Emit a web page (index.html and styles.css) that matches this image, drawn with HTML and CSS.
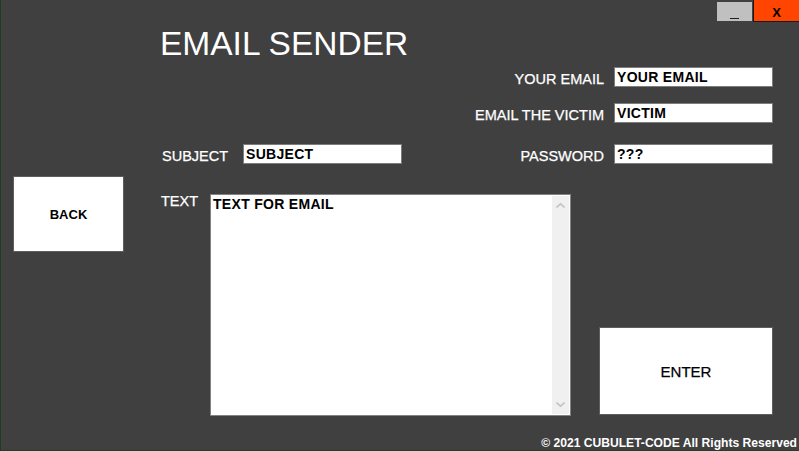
FILE: index.html
```html
<!DOCTYPE html>
<html lang="en">
<head>
<meta charset="utf-8">
<title>Email Sender</title>
<link rel="stylesheet" href="styles.css">
</head>
<body>
<div class="window">
  <div class="winbar">
    <button class="btn-min" type="button"><span class="min-glyph"></span></button>
    <button class="btn-close" type="button">X</button>
  </div>
  <h1 class="title">EMAIL SENDER</h1>
  <div class="row row-right r1">
    <span class="label">YOUR EMAIL</span>
    <div class="field">YOUR EMAIL</div>
  </div>
  <div class="row row-right r2">
    <span class="label">EMAIL THE VICTIM</span>
    <div class="field">VICTIM</div>
  </div>
  <div class="row r3">
    <div class="pair">
      <span class="label label-subject">SUBJECT</span>
      <div class="field">SUBJECT</div>
    </div>
    <div class="pair pair-gap">
      <span class="label">PASSWORD</span>
      <div class="field">???</div>
    </div>
  </div>
  <div class="main">
    <button class="back" type="button">BACK</button>
    <div class="text-group">
      <span class="label label-text">TEXT</span>
      <div class="msg">
        <div class="msg-text">TEXT FOR EMAIL</div>
        <div class="scroll">
          <svg width="9" height="5" viewBox="0 0 9 5"><polyline points="0.5,4.5 4.5,0.8 8.5,4.5" fill="none" stroke="#c4c4c4" stroke-width="1.6"/></svg>
          <svg width="9" height="5" viewBox="0 0 9 5"><polyline points="0.5,0.5 4.5,4.2 8.5,0.5" fill="none" stroke="#c4c4c4" stroke-width="1.6"/></svg>
        </div>
      </div>
    </div>
    <button class="enter" type="button">ENTER</button>
  </div>
  <footer class="footer">© 2021 CUBULET-CODE All Rights Reserved</footer>
</div>
</body>
</html>
```
FILE: styles.css
```css
* { box-sizing: border-box; }
html, body { margin: 0; padding: 0; }
body {
  background: #404040;
  font-family: "Liberation Sans", Arial, sans-serif;
  color: #fff;
}
.window {
  width: 799px;
  height: 451px;
  overflow: hidden;
  background: #404040;
  border-left: 1px solid #1d3f20;
  border-bottom: 1px solid #1d4322;
  display: flex;
  flex-direction: column;
}
.winbar {
  display: flex;
  justify-content: flex-end;
  height: 22px;
  flex: none;
}
.btn-min {
  width: 35px;
  height: 19px;
  margin-top: 2px;
  background: #c0c0c0;
  border: 0;
  padding: 0;
  display: flex;
  justify-content: center;
}
.min-glyph {
  display: block;
  width: 9px;
  height: 1px;
  margin-top: 16px;
  background: #1c1c2c;
}
.btn-close {
  width: 46px;
  height: 22px;
  margin-left: 1px;
  padding: 4px 0 0;
  background: #ff4500;
  border: 0;
  border-left: 1px solid #1a1a1a;
  border-bottom: 1px solid #1a1a1a;
  color: #000;
  font: bold 13px/16px "Liberation Sans", Arial, sans-serif;
  text-align: center;
}
.title {
  margin: 5px 0 0 159px;
  font-size: 33.5px;
  line-height: 33px;
  font-weight: normal;
  white-space: nowrap;
  flex: none;
}
.row {
  display: flex;
  align-items: flex-start;
  padding-right: 26px;
  height: 20px;
  flex: none;
}
.row-right { justify-content: flex-end; gap: 10px; }
.r1 { margin-top: 7px; }
.r2 { margin-top: 16px; }
.r3 {
  margin-top: 21px;
  padding-left: 161px;
  justify-content: space-between;
}
.pair { display: flex; align-items: flex-start; }
.pair-gap { gap: 10px; }
.label {
  font-size: 14.5px;
  line-height: 15px;
  padding-top: 5px;
  white-space: nowrap;
  -webkit-text-stroke: 0.25px #fff;
}
.label-subject { width: 81px; }
.field {
  width: 159px;
  height: 20px;
  background: #fff;
  border: 1px solid #7c7c7c;
  color: #000;
  font-weight: bold;
  font-size: 14px;
  letter-spacing: 0.3px;
  line-height: 18px;
  padding: 0 2px;
  white-space: nowrap;
  overflow: hidden;
}
.main {
  display: flex;
  align-items: flex-start;
  margin-top: 12px;
  padding-left: 12px;
  padding-right: 26px;
  height: 240px;
  flex: none;
}
.back {
  width: 111px;
  height: 76px;
  background: #fff;
  border: 1px solid #5e5e5e;
  color: #000;
  font: bold 13px "Liberation Sans", Arial, sans-serif;
  padding: 0;
}
.text-group {
  display: flex;
  align-items: flex-start;
  margin-left: 37px;
  margin-top: 18px;
}
.label-text { width: 49px; padding-top: 0; }
.msg {
  width: 361px;
  height: 222px;
  background: #fff;
  border: 1px solid #828282;
  display: flex;
}
.msg-text {
  flex: 1;
  padding: 2px 2px;
  color: #000;
  font-weight: bold;
  font-size: 14px;
  letter-spacing: 0.3px;
  line-height: 15px;
}
.scroll {
  width: 17px;
  margin: 1px 1px 1px 0;
  background: #f0f0f0;
  display: flex;
  flex-direction: column;
  justify-content: space-between;
  align-items: center;
  padding: 7px 0;
}
.scroll svg { display: block; }
.enter {
  margin-left: auto;
  align-self: flex-end;
  margin-bottom: 1px;
  width: 174px;
  height: 88px;
  background: #fff;
  border: 1px solid #5e5e5e;
  color: #000;
  font: 15px "Liberation Sans", Arial, sans-serif;
  -webkit-text-stroke: 0.25px #000;
  padding: 0;
}
.footer {
  margin-top: 20px;
  padding-right: 2px;
  text-align: right;
  font-weight: bold;
  font-size: 12.1px;
  line-height: 14px;
  white-space: nowrap;
  flex: none;
}
```
